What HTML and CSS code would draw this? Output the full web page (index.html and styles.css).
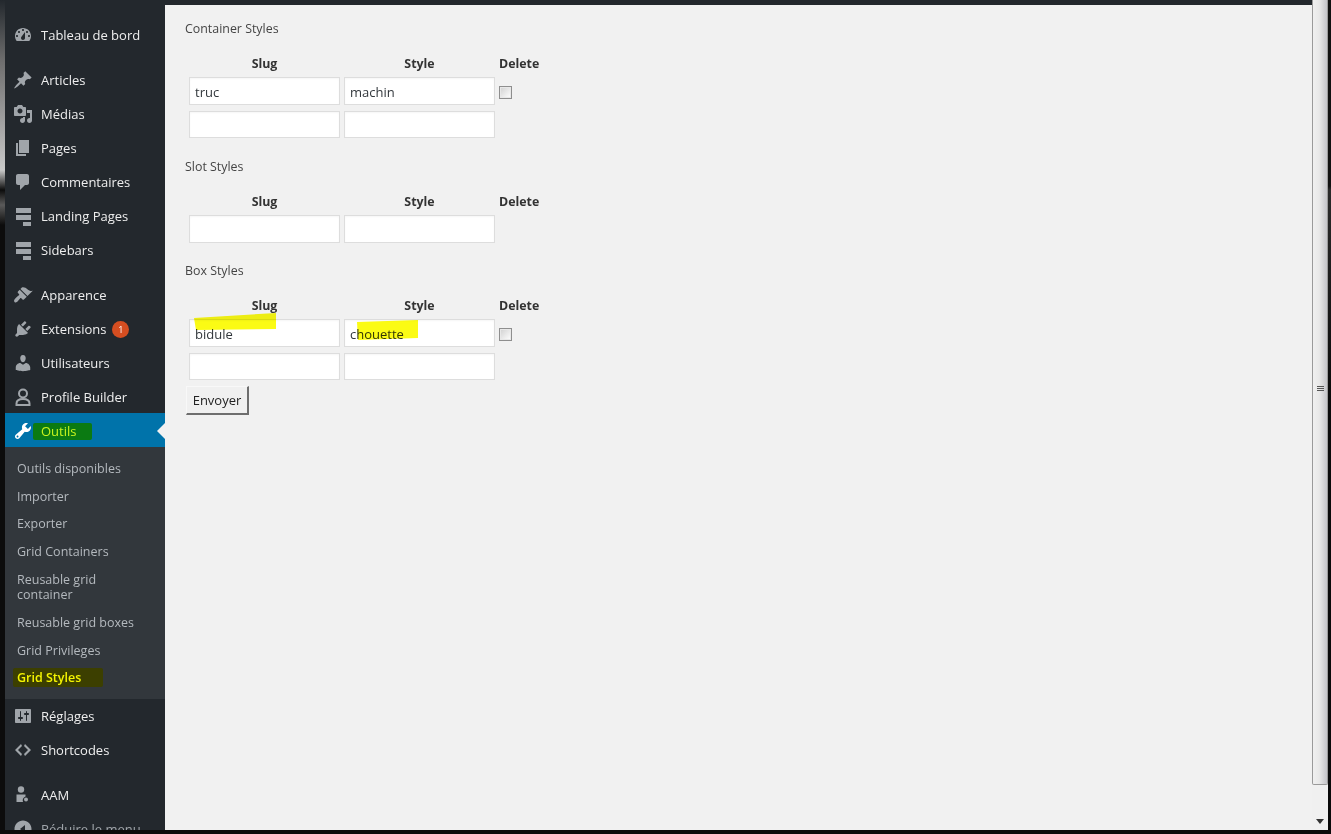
FILE: index.html
```html
<!DOCTYPE html>
<html lang="en">
<head>
  <meta charset="UTF-8">
  <title>Grid Styles</title>
  <link rel="stylesheet" href="styles.css">
</head>
<body>
  <div class="frame">
    <div class="edge-left"></div>

    <nav class="adminmenu">
      <ul class="menu-group">
        <li class="menu-item">
          <svg class="menu-icon" viewBox="0 0 20 20"><path fill-rule="evenodd" d="M3.76 16h12.48c1.1-1.37 1.76-3.11 1.76-5 0-4.42-3.58-8-8-8s-8 3.58-8 8c0 1.89.66 3.63 1.76 5zM10 4c.55 0 1 .45 1 1s-.45 1-1 1-1-.45-1-1 .45-1 1-1zM6 6c.55 0 1 .45 1 1s-.45 1-1 1-1-.45-1-1 .45-1 1-1zm8 0c.55 0 1 .45 1 1s-.45 1-1 1-1-.45-1-1 .45-1 1-1zm-5.37 5.55L12 7v6c0 1.1-.9 2-2 2s-2-.9-2-2c0-.57.24-1.08.63-1.45zM4 10c.55 0 1 .45 1 1s-.45 1-1 1-1-.45-1-1 .45-1 1-1zm12 0c.55 0 1 .45 1 1s-.45 1-1 1-1-.45-1-1 .45-1 1-1z"/></svg>
          <span>Tableau de bord</span>
        </li>
      </ul>

      <ul class="menu-group">
        <li class="menu-item">
          <svg class="menu-icon" viewBox="0 0 20 20"><path d="M10.44 3.02l1.82-1.82 6.36 6.35-1.83 1.82c-1.05-.68-2.48-.57-3.41.36l-.75.75c-.92.93-1.04 2.35-.35 3.41l-1.83 1.82-2.41-2.41-2.8 2.79c-.42.42-3.38 2.71-3.8 2.29s1.86-3.39 2.28-3.81l2.79-2.79L4.1 9.36l1.83-1.82c1.05.69 2.48.57 3.4-.36l.75-.75c.93-.92 1.05-2.35.36-3.41z"/></svg>
          <span>Articles</span>
        </li>
        <li class="menu-item">
          <svg class="menu-icon" viewBox="0 0 20 20"><path fill-rule="evenodd" d="M13 11V4c0-.55-.45-1-1-1h-1.67L9 1H5L3.67 3H2c-.55 0-1 .45-1 1v7c0 .55.45 1 1 1h10c.55 0 1-.45 1-1zM7 4.500c1.380 0 2.500 1.120 2.500 2.500S8.380 9.500 7 9.500 4.500 8.380 4.500 7 5.620 4.500 7 4.500zM14 6h5v10.500c0 1.380-1.120 2.500-2.500 2.500S14 17.880 14 16.500s1.120-2.500 2.500-2.500c.17 0 .34.02.5.05V9h-3V6zm-4 8.050V13h2v3.500c0 1.380-1.120 2.500-2.500 2.500S7 17.880 7 16.500 8.120 14 9.500 14c.17 0 .34.02.5.05z"/></svg>
          <span>Médias</span>
        </li>
        <li class="menu-item">
          <svg class="menu-icon" viewBox="0 0 20 20"><path d="M6 15V2h10v13H6zm-1 1h8v2H3V5h2v11z"/></svg>
          <span>Pages</span>
        </li>
        <li class="menu-item">
          <svg class="menu-icon" viewBox="0 0 20 20"><path d="M5 2h9c1.100 0 2 .9 2 2v7c0 1.100-.9 2-2 2h-2l-5 5v-5H5c-1.100 0-2-.9-2-2V4c0-1.100.9-2 2-2z"/></svg>
          <span>Commentaires</span>
        </li>
        <li class="menu-item">
          <svg class="menu-icon" viewBox="0 0 20 20"><path d="M3 2h15v5H3zM3 9h15v5H3zM10 16h8v4h-8z"/></svg>
          <span>Landing Pages</span>
        </li>
        <li class="menu-item">
          <svg class="menu-icon" viewBox="0 0 20 20"><path d="M3 2h15v5H3zM3 9h15v5H3zM10 16h8v4h-8z"/></svg>
          <span>Sidebars</span>
        </li>
      </ul>

      <ul class="menu-group">
        <li class="menu-item">
          <svg class="menu-icon" viewBox="0 0 20 20"><path d="M14.480 11.060L7.410 3.990l1.500-1.500c.5-.56 2.300-.47 3.510.32 1.210.8 1.430 1.280 2.910 2.100 1.180.64 2.450 1.260 4.450.85zm-.71.71L6.700 4.700 4.930 6.470c-.39.39-.39 1.020 0 1.410l1.060 1.060c.39.39.39 1.030 0 1.420-.6.6-1.430 1.110-2.210 1.690-.35.26-.7.53-1.010.84-1.340 1.340-2.370 2.920-1.270 4.020 1.100 1.100 2.680.07 3.020-.3.31-.31.58-.66.84-1.010.58-.78 1.090-1.610 1.690-2.210.39-.39 1.030-.39 1.420 0l1.060 1.060c.39.39 1.020.39 1.410 0z"/></svg>
          <span>Apparence</span>
        </li>
        <li class="menu-item">
          <svg class="menu-icon" viewBox="0 0 20 20"><path d="M13.110 4.360L9.870 7.600 8 5.730l3.240-3.240c.35-.34 1.050-.2 1.560.32.52.51.66 1.210.31 1.550zm-8 1.770l.91-1.120 9.010 9.010-1.190.84c-.71.71-2.630 1.160-3.820 1.160H6.140L4.900 17.260c-.59.59-1.540.59-2.120 0-.59-.58-.59-1.530 0-2.120l1.240-1.240v-3.880c0-1.130.4-3.190 1.090-3.890zm7.260 3.970l3.240-3.240c.34-.35 1.040-.21 1.550.31.52.51.66 1.210.31 1.550l-3.240 3.250z"/></svg>
          <span>Extensions</span>
          <span class="badge">1</span>
        </li>
        <li class="menu-item">
          <svg class="menu-icon" viewBox="0 0 20 20"><path d="M10 9.250c-2.270 0-2.730-3.440-2.730-3.440C7 4.020 7.820 2 9.970 2c2.160 0 2.980 2.020 2.710 3.810 0 0-.41 3.440-2.680 3.440zm0 2.570L12.720 10c2.390 0 4.520 2.330 4.520 4.530v2.490s-3.650 1.130-7.240 1.130c-3.650 0-7.240-1.130-7.240-1.130v-2.490c0-2.250 1.940-4.480 4.470-4.480z"/></svg>
          <span>Utilisateurs</span>
        </li>
        <li class="menu-item">
          <svg class="menu-icon icon-outline" viewBox="0 0 20 20"><circle cx="10" cy="6.500" r="4"/><path d="M3.500 18v-1.500c0-3 2.500-4.500 6.500-4.500s6.500 1.500 6.500 4.500V18z"/></svg>
          <span>Profile Builder</span>
        </li>
        <li class="menu-current">
          <div class="menu-item current-item">
            <svg class="menu-icon" viewBox="0 0 20 20"><path fill-rule="evenodd" d="M16.680 9.770c-1.340 1.340-3.300 1.670-4.950.99l-5.410 6.520c-.99.99-2.590.99-3.580 0s-.99-2.590 0-3.570l6.520-5.420c-.68-1.650-.35-3.610.99-4.950 1.280-1.280 3.120-1.620 4.720-1.060l-2.890 2.890 2.820 2.820 2.860-2.870c.53 1.580.18 3.390-1.080 4.650zM3.810 16.210c.4.39 1.040.39 1.430 0 .4-.4.4-1.040 0-1.430-.39-.4-1.030-.4-1.430 0-.39.39-.39 1.030 0 1.430z"/></svg>
            <span class="green-mark">Outils</span>
          </div>
          <ul class="submenu">
            <li class="sub-item">Outils disponibles</li>
            <li class="sub-item">Importer</li>
            <li class="sub-item">Exporter</li>
            <li class="sub-item">Grid Containers</li>
            <li class="sub-item">Reusable grid<br>container</li>
            <li class="sub-item">Reusable grid boxes</li>
            <li class="sub-item">Grid Privileges</li>
            <li class="sub-item"><span class="olive-mark">Grid Styles</span></li>
          </ul>
        </li>
        <li class="menu-item">
          <svg class="menu-icon" viewBox="0 0 20 20"><path fill-rule="evenodd" d="M18 16V4c0-.55-.45-1-1-1H3c-.55 0-1 .45-1 1v12c0 .55.45 1 1 1h14c.55 0 1-.45 1-1zM8 11h1c.55 0 1 .45 1 1s-.45 1-1 1H8v1.500c0 .28-.22.5-.5.5s-.5-.22-.5-.5V13H6c-.55 0-1-.45-1-1s.45-1 1-1h1V5.500c0-.28.22-.5.5-.5s.5.22.5.5V11zm5-2h-1c-.55 0-1-.45-1-1s.45-1 1-1h1V5.500c0-.28.22-.5.5-.5s.5.22.5.5V7h1c.55 0 1 .45 1 1s-.45 1-1 1h-1v5.500c0 .28-.22.5-.5.5s-.5-.22-.5-.5V9z"/></svg>
          <span>Réglages</span>
        </li>
        <li class="menu-item">
          <svg class="menu-icon" viewBox="0 0 20 20"><path d="M9 6l-4 4 4 4-1 2-6-6 6-6zm2 8l4-4-4-4 1-2 6 6-6 6z"/></svg>
          <span>Shortcodes</span>
        </li>
      </ul>

      <ul class="menu-group">
        <li class="menu-item">
          <svg class="menu-icon" viewBox="0 0 20 20"><circle cx="8" cy="4.500" r="3.200"/><path d="M3.500 9.500h9v2a4.500 4.500 0 0 0-2.500 5.500H3.500z"/><circle cx="13" cy="14.500" r="2"/></svg>
          <span>AAM</span>
        </li>
        <li class="menu-item collapse-item">
          <svg class="menu-icon" viewBox="0 0 20 20"><path fill-rule="evenodd" d="M10 1.500c-4.700 0-8.500 3.800-8.500 8.500s3.800 8.500 8.500 8.500 8.500-3.800 8.500-8.500-3.800-8.500-8.500-8.500zM12 14l-5-4 5-4v8z"/></svg>
          <span>Réduire le menu</span>
        </li>
      </ul>
    </nav>

    <main class="content">
      <div class="topbar"></div>
      <form class="styles-form">
        <p class="section-title">Container Styles</p>
        <table class="style-table">
          <tr><th>Slug</th><th>Style</th><th class="delete-col">Delete</th></tr>
          <tr>
            <td><input class="text-field" type="text" value="truc"></td>
            <td><input class="text-field" type="text" value="machin"></td>
            <td><input class="check-field" type="checkbox"></td>
          </tr>
          <tr>
            <td><input class="text-field" type="text"></td>
            <td><input class="text-field" type="text"></td>
            <td></td>
          </tr>
        </table>

        <p class="section-title">Slot Styles</p>
        <table class="style-table slot-table">
          <tr><th>Slug</th><th>Style</th><th class="delete-col">Delete</th></tr>
          <tr>
            <td><input class="text-field" type="text"></td>
            <td><input class="text-field" type="text"></td>
            <td></td>
          </tr>
        </table>

        <p class="section-title">Box Styles</p>
        <div class="marked-block">
          <table class="style-table last-table">
            <tr><th>Slug</th><th>Style</th><th class="delete-col">Delete</th></tr>
            <tr>
              <td><input class="text-field" type="text" value="bidule"></td>
              <td><input class="text-field" type="text" value="chouette"></td>
              <td><input class="check-field" type="checkbox"></td>
            </tr>
            <tr>
              <td><input class="text-field" type="text"></td>
              <td><input class="text-field" type="text"></td>
              <td></td>
            </tr>
          </table>
          <!-- yellow felt pen strokes on top of the fields -->
          <svg class="pen-strokes" viewBox="0 0 240 40" width="240" height="40">
            <polygon points="9,6 91,1 91,17 11,18"/>
            <polygon points="172,10 233,8 233,26 173,28"/>
          </svg>
        </div>
        <button class="submit-btn" type="button">Envoyer</button>
      </form>
    </main>

    <div class="scrollbar">
      <div class="scroll-thumb"><span class="scroll-grip"></span></div>
      <div class="scroll-arrow"></div>
    </div>
    <div class="edge-right"></div>
  </div>
  <div class="edge-bottom"></div>
</body>
</html>
```

FILE: styles.css
```css
html, body {
  margin: 0;
  height: 834px;
  overflow: hidden;
  background-color: #0a0a0a;
  font-family: "Open Sans", sans-serif;
}

.frame {
  display: flex;
  height: 830px;
}

.edge-bottom {
  height: 4px;
  background-color: #0a0a0a;
}

.edge-left {
  width: 5px;
  background: linear-gradient(to bottom, #23282d 0, #6d6d6d 60px, #c9c9c9 170px, #0c0c0c 190px, #5a5a5a 205px, #0c0c0c 225px);
}

.edge-right {
  width: 3px;
  background: linear-gradient(to bottom, #111 0, #111 186px, #2a2a2a 190px, #0a0a0a 400px);
}

/* sidebar */
.adminmenu {
  width: 160px;
  height: 830px;
  flex-shrink: 0;
  background-color: #23282d;
  overflow: hidden;
  padding-top: 18px;
  box-sizing: border-box;
}

.menu-group {
  list-style: none;
  margin: 0 0 11px;
  padding: 0;
}

.menu-item {
  display: flex;
  align-items: center;
  height: 34px;
  padding-left: 8px;
  color: #eeeeee;
  font-size: 13px;
  white-space: nowrap;
}

.menu-icon {
  width: 20px;
  height: 20px;
  margin-right: 8px;
  flex-shrink: 0;
  fill: #a0a5aa;
}

.icon-outline {
  fill: none;
  stroke: #a0a5aa;
  stroke-width: 2;
}

.menu-current {
  margin-top: -1px;
  height: 286px;
  background-color: #32373c;
}

.current-item {
  position: relative;
  padding-top: 2px;
  height: 32px;
  background-color: #0073aa;
}

.current-item .menu-icon {
  fill: #ffffff;
}

.current-item::after {
  content: "";
  position: absolute;
  right: 0;
  top: 10px;
  border: 8px solid transparent;
  border-right-color: #f1f1f1;
  border-left-width: 0;
}

.green-mark {
  margin-left: -8px;
  padding: 0 16px 0 8px;
  line-height: 17px;
  background-color: #0b7a12;
  color: #c8f51e;
  border-radius: 2px;
}

.submenu {
  list-style: none;
  margin: 0;
  padding: 7.5px 0 0;
}

.sub-item {
  padding: 6.4px 12px;
  line-height: 15px;
  font-size: 12.5px;
  color: #b4b9be;
}

.olive-mark {
  margin-left: -4px;
  padding: 1px 22px 1px 4px;
  background-color: #3c3f00;
  color: #f5f500;
  font-size: 12.5px;
  font-weight: 600;
  border-radius: 2px;
}

.badge {
  width: 17px;
  height: 17px;
  margin-left: 6px;
  border-radius: 50%;
  background-color: #d54e21;
  color: #ffffff;
  font-size: 9px;
  line-height: 17px;
  text-align: center;
}

.collapse-item {
  color: #a0a5aa;
}

/* main area */
.content {
  flex: 1;
  background-color: #f1f1f1;
}

.topbar {
  height: 5px;
  background-color: #23282d;
}

.styles-form {
  padding: 14px 0 0 20px;
}

.section-title {
  margin: 0 0 11px;
  padding-top: 1px;
  height: 17px;
  line-height: 17px;
  font-size: 12.4px;
  color: #444444;
}

.style-table {
  border-collapse: separate;
  border-spacing: 4px 6px;
  margin-bottom: 13px;
  color: #333333;
}

.slot-table {
  margin-bottom: 12.5px;
}

.last-table {
  margin-bottom: 0;
}

.style-table th {
  height: 15px;
  padding: 2px 0 0;
  line-height: 15px;
  font-size: 12.4px;
  font-weight: 700;
  text-align: center;
}

.style-table td {
  padding: 0;
  vertical-align: middle;
}

.style-table .delete-col {
  text-align: left;
}

.text-field {
  display: block;
  box-sizing: border-box;
  width: 151px;
  height: 27.5px;
  margin: 0;
  padding: 2px 5px 0;
  border: 1px solid #dddddd;
  background-color: #ffffff;
  color: #32373c;
  font-family: "Open Sans", sans-serif;
  font-size: 13px;
  box-shadow: inset 0 1px 2px rgba(0, 0, 0, 0.04);
  outline: none;
}

.check-field {
  appearance: none;
  display: block;
  width: 13px;
  height: 13px;
  margin: 4px 0 0;
  border: 1px solid #8e8e8e;
  background: linear-gradient(135deg, #d0d0d0, #ffffff);
  box-shadow: inset 0 0 0 1px #e8e8e8;
}

.marked-block {
  position: relative;
  width: 360px;
}

.pen-strokes {
  position: absolute;
  left: 0;
  top: 22px;
  mix-blend-mode: multiply;
  pointer-events: none;
}

.pen-strokes polygon {
  fill: #fbfb14;
}

.submit-btn {
  display: block;
  box-sizing: border-box;
  width: 63px;
  height: 29px;
  margin: 0 0 0 1px;
  padding: 0;
  border: 1px solid;
  border-color: #f8f8f8 #6e6e6e #6e6e6e #f8f8f8;
  border-width: 1px 2px 2px 1px;
  background-color: #f0f0f0;
  color: #222222;
  font-family: "Open Sans", sans-serif;
  font-size: 13px;
}

/* window scrollbar */
.scrollbar {
  position: relative;
  width: 16px;
  flex-shrink: 0;
  background-color: #f0f0f0;
}

.scroll-thumb {
  display: flex;
  align-items: center;
  justify-content: center;
  box-sizing: border-box;
  height: 785px;
  padding-bottom: 6px;
  border: 1px solid #9a9a9a;
  border-top: none;
  border-radius: 0 0 2px 2px;
  background: linear-gradient(to right, #f0f0f0, #e8e8e8 45%, #c4c4c8);
}

.scroll-grip {
  width: 7px;
  height: 6px;
  background: repeating-linear-gradient(to bottom, #555 0, #555 1px, transparent 1px, transparent 2px);
}

.scroll-arrow {
  position: absolute;
  left: 4px;
  top: 819px;
  width: 0;
  height: 0;
  border: 4px solid transparent;
  border-top: 5px solid #333333;
  border-bottom: 0;
}
```
